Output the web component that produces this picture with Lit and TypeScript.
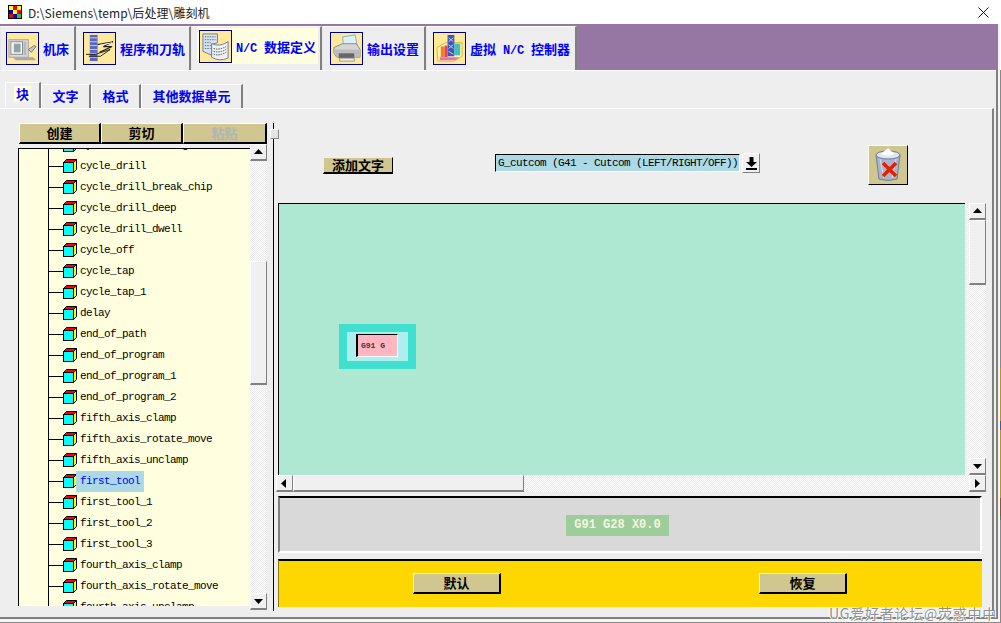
import { LitElement, html, css, svg } from "lit";
import { customElement } from "lit/decorators.js";

const NAMES = ["cycle_bore_no_drag","cycle_drill","cycle_drill_break_chip","cycle_drill_deep","cycle_drill_dwell","cycle_off","cycle_tap","cycle_tap_1","delay","end_of_path","end_of_program","end_of_program_1","end_of_program_2","fifth_axis_clamp","fifth_axis_rotate_move","fifth_axis_unclamp","first_tool","first_tool_1","first_tool_2","first_tool_3","fourth_axis_clamp","fourth_axis_rotate_move","fourth_axis_unclamp"];

const cube = html`<svg class="cube" width="14" height="14" viewBox="0 0 14 14">
  <path d="M.5 3.5 L3.5 .5 H13.5 L10.5 3.5Z" fill="#f00" stroke="#000"/>
  <path d="M10.5 3.5 L13.5 .5 V10.5 L10.5 13.5Z" fill="#ff0" stroke="#000"/>
  <rect x=".5" y="3.5" width="10" height="10" fill="#0ff" stroke="#000"/>
</svg>`;

const machine = svg`
  <rect x="2" y="7" width="20" height="18" fill="#dcdcdc" stroke="#a0a0a0"/>
  <rect x="4" y="9" width="12" height="13" fill="#f6f6f6" stroke="#8a8a8a"/>
  <rect x="7" y="11" width="7" height="9" fill="#8fa3a8"/>
  <rect x="17" y="9" width="3" height="14" fill="#b8b8b8"/>
  <path d="M22 17 L28 13 L30 14 L25 20 Z" fill="#c4c8c8" stroke="#7c7c7c"/>
  <path d="M6 25 H27 L30 28 H9Z" fill="#a9a9a9"/>`;
const program = svg`
  <rect x="6" y="2" width="8" height="27" fill="#5a66c0"/>
  <path d="M6 5 H14 M6 9 H14 M6 13 H14 M6 17 H14 M6 21 H14 M6 25 H14" stroke="#c8ccec" stroke-width="1"/>
  <path d="M14 12 L30 9 L20 14 L29 14 L16 20" fill="none" stroke="#222" stroke-width="1.2"/>
  <path d="M2 22 H12 L27 17 L17 24 H5" fill="none" stroke="#222" stroke-width="1"/>
  <path d="M15 13 L29 10" stroke="#fff" stroke-width="1"/>`;
const data = svg`
  <path d="M3 3 H18 V12 L12 14 V25 L3 21Z" fill="#d8e2ee" stroke="#6b7e95"/>
  <path d="M12 13 Q20 17 29 11 V28 Q20 32 12 27Z" fill="#eef1f4" stroke="#6b7e95"/>
  <path d="M5 6 H16 M5 9 H16 M5 12 H11 M5 15 H11 M5 18 H11" stroke="#5a6a80" stroke-dasharray="1.5 1"/>
  <path d="M14 18 Q20 20 27 16 M14 21 Q20 23 27 19 M14 24 Q20 26 27 22" stroke="#4a4a4a" fill="none" stroke-dasharray="1.5 1"/>`;
const printer = svg`
  <path d="M12 4 L25 2 L27 13 L13 15Z" fill="#d9f2f7" stroke="#9ab"/>
  <path d="M3 15 L12 11 H26 L30 17 V25 H6 L3 21Z" fill="#d6d6d6" stroke="#8c8c8c"/>
  <path d="M3 17 H30 V25 H6Z" fill="#bcbcbc"/>
  <rect x="8" y="21" width="16" height="5" fill="#666"/>
  <rect x="9" y="26" width="15" height="3" fill="#eee" stroke="#999"/>`;
const virtual = svg`
  <path d="M3 15 L12 10 H29 V24 L21 29 H4Z" fill="#fff3a8" stroke="#d8b83c"/>
  <rect x="14" y="2" width="7" height="22" fill="#3d55bf"/>
  <path d="M15 5 L20 9 M20 5 L15 9 M15 12 L20 16 M20 12 L15 16 M15 19 L20 22" stroke="#c5d0f3"/>
  <rect x="7" y="14" width="4" height="11" fill="#f08020"/>
  <rect x="11" y="13" width="3" height="12" fill="#e84060"/>
  <rect x="21" y="11" width="6" height="12" fill="#40c0c0"/>
  <path d="M6 25 H26 L22 28 H6Z" fill="#e070d0"/>`;

const triangle = (dir: string) => {
  const d: Record<string, string> = { up: "M0 6 L4.5 1 L9 6Z", down: "M0 2 H9 L4.5 7Z", left: "M6 0 V9 L1 4.5Z", right: "M2 0 V9 L7 4.5Z" };
  return html`<span class="sb-btn"><svg width="9" height="9" viewBox="0 0 9 9"><path d=${d[dir]} fill="#000"/></svg></span>`;
};

const TABS = [
  { cls: "t1", label: "机床", icon: machine },
  { cls: "t2", label: "程序和刀轨", icon: program },
  { cls: "t3 on", label: html`<b class="m">N/C</b>数据定义`, icon: data },
  { cls: "t4", label: "输出设置", icon: printer },
  { cls: "t5", label: html`虚拟<b class="m">N/C</b>控制器`, icon: virtual },
];

@customElement("app-root")
export class AppRoot extends LitElement {
  static styles = css`
    :host { display: block; position: relative; width: 1001px; height: 623px; overflow: hidden; background: #fff; font-family: "Noto Sans CJK SC", "Liberation Sans", sans-serif; }
    * { box-sizing: border-box; }
    .title { height: 24px; background: #fff; display: flex; align-items: center; padding-left: 8px; font-size: 12px; color: #222; }
    .title .txt { margin-left: 6px; font-family: "Noto Sans CJK SC", sans-serif; letter-spacing: .1px; }
    .title .close { margin-left: auto; margin-right: 12px; }
    .main { display: flex; height: 599px; border-bottom: 1px solid #888; background: #f4f4f4; }
    .window { width: 998px; height: 595px; background: #f0f0f0; border-bottom: 2px solid #808080; display: flex; flex-direction: column; }
    .body { flex: 1; min-height: 0; display: flex; flex-direction: column; border-right: 2px solid #808080; }
    .edge { width: 3px; display: flex; flex-direction: column; align-items: flex-end; background: #f4f4f4; }
    .edge i { display: block; width: 1px; }
    .e0 { height: 46px; background: #fff; }
    .e1 { height: 298px; background: #888; }
    .e2 { height: 53px; background: #c09020; }
    .e3 { height: 9px; background: #3a5ea8; }
    .e4 { height: 68px; background: #c09020; }
    .e5 { height: 18px; background: #8a5a20; }
    .e6 { height: 4px; background: #3a8a50; }
    .e7 { flex: 1; background: #888; }
    .tabs { height: 46px; flex: none; background: #9676a2; display: flex; align-items: flex-end; }
    .tab { height: 44px; background: #eee; border-top: 1px solid #fff; border-left: 1px solid #e8e8e8; border-right: 2px solid #808080; display: flex; align-items: center; padding-left: 6px; font-size: 13px; font-weight: 700; color: #0000ff; white-space: nowrap; }
    .in { display: flex; align-items: center; gap: 4px; }
    .t1 { width: 76px; padding-left: 5px; } .t2 { width: 115px; } .t3 { width: 131px; padding-left: 5px; } .t4 { width: 104px; padding-left: 7px; } .t5 { width: 151px; }
    .t3 .in { width: 121px; height: 36px; margin-bottom: 5px; background: #ffffe0; padding-left: 2px; }
    .m { font-family: "Liberation Mono", monospace; font-size: 12px; font-weight: 700; letter-spacing: -.2px; margin: 0 7px; }
    .t3 .m { margin-left: 0; margin-right: 7px; }
    .ico { width: 33px; height: 33px; flex: none; border: 1px solid #000080; background: #ffe99a; display: block; }
    .rule { height: 1px; flex: none; background: #fff; }
    .sub { height: 37px; flex: none; background: #eee; display: flex; align-items: flex-end; padding-left: 5px; }
    .st { height: 24px; background: #eee; border-top: 1px solid #fff; border-left: 1px solid #fff; border-right: 2px solid #808080; display: flex; align-items: center; justify-content: center; padding-bottom: 2px; font-size: 13px; font-weight: 700; color: #00f; }
    .st.s1 { width: 36px; height: 26px; padding-bottom: 0; }
    .st.s1 span { background: #ffffe0; padding: 0 2px; line-height: 16px; margin-bottom: 4px; }
    .st.s2 { width: 50px; } .st.s3 { width: 50px; } .st.s4 { width: 102px; }
    .panel { flex: 1; min-height: 0; width: 994px; background: #eee; border-top: 1px solid #fff; border-right: 2px solid #808080; display: flex; padding-left: 18px; }
    .left { width: 249px; flex: none; padding-top: 14px; }
    .btns { display: flex; padding-left: 1px; height: 21px; }
    .btn { background: #cfc690; border-top: 1px solid #fffff0; border-left: 1px solid #fffff0; border-right: 2px solid #000; border-bottom: 2px solid #000; padding-bottom: 1px; font-size: 13px; font-weight: 700; color: #000; display: flex; align-items: center; justify-content: center; line-height: 1; }
    .btns .btn { width: 82px; }
    .btns .btn:last-child { width: 84px; color: #b4b4b4; }
    .lbody { display: flex; height: 466px; }
    .tree { width: 233px; height: 458px; margin-top: 4px; background: #ffffe0; border-top: 1px solid #000; border-left: 1px solid #000; overflow: hidden; }
    .list { margin: -14px 0 0 29px; border-left: 1px solid #000; }
    .row { height: 21px; display: flex; align-items: center; font: 11px/21px "Liberation Mono", monospace; letter-spacing: -.6px; color: #000; white-space: nowrap; }
    .row::before { content: ""; width: 14px; height: 1px; background: #000; flex: none; margin-top: -1px; }
    .cube { flex: none; margin-top: -2px; }
    .row span { height: 21px; padding: 0 4px 0 4px; margin-left: -1px; }
    .row.sel span { background: #add8e6; color: #00f; }
    .vbar { width: 17px; flex: none; display: flex; flex-direction: column; }
    .track { background: repeating-conic-gradient(#fff 0 25%, #e9e9e9 0 50%) 0 0 / 2px 2px; }
    .sb-btn { width: 17px; height: 17px; flex: none; background: #f0f0f0; border-top: 1px solid #fff; border-left: 1px solid #fff; border-right: 1px solid #808080; border-bottom: 2px solid #808080; display: flex; align-items: center; justify-content: center; }
    .thumb { flex: none; background: #f0f0f0; border-top: 1px solid #fff; border-left: 1px solid #fff; border-right: 1px solid #808080; border-bottom: 2px solid #808080; }
    .gap { flex: 1; }
    .lth { height: 124px; margin-top: 100px; }
    .right { width: 720px; flex: none; margin-left: 6px; margin-top: 14px; height: 488px; border-left: 1px solid #000; position: relative; }
    .knob { position: absolute; left: -4px; top: 6px; width: 9px; height: 10px; background: #e4e4e4; border: 1px solid #fff; border-right-color: #888; border-bottom-color: #888; }
    .head { height: 80px; display: flex; align-items: center; }
    .btn.add { width: 70px; height: 17px; margin-left: 49px; margin-top: 4px; font-size: 13px; border-top: 1px solid #eee; border-left: 1px solid #eee; border-right: 1px solid #000; border-bottom: 2px solid #000; }
    .combo { width: 245px; height: 18px; margin-left: 102px; background: #add8e6; border-top: 1px solid #000; border-left: 1px solid #000; border-bottom: 1px solid #fff; border-right: 1px solid #fff; font: 11px/17px "Liberation Mono", monospace; letter-spacing: -.6px; padding-left: 2px; white-space: pre; overflow: hidden; color: #000; }
    .arrow { width: 18px; height: 20px; margin-left: 2px; background: #f0f0f0; border-top: 1px solid #fff; border-left: 1px solid #fff; border-right: 1px solid #808080; border-bottom: 1px solid #808080; display: flex; align-items: center; justify-content: center; }
    .trash { width: 40px; height: 40px; margin-left: 108px; margin-top: 3px; background: #cfc690; border-top: 1px solid #fffff0; border-left: 1px solid #fffff0; border-right: 1px solid #000; border-bottom: 1px solid #000; display: block; }
    .scroller { margin-left: 2px; width: 710px; display: grid; grid-template-columns: 689px 21px; grid-template-rows: 272px 17px; }
    .canvas { position: relative; margin-left: 2px; background: #aee8d2; border-top: 1px solid #000; border-left: 1px solid #000; }
    .block { position: absolute; left: 60px; top: 120px; width: 77px; height: 45px; background: #40e0d0; padding: 8px; }
    .block div { height: 29px; background: #afeeee; padding: 2px 0 0 9px; }
    .block p { margin: 0; width: 42px; height: 23px; background: #ffb6c1; border-top: 1px solid #000; border-left: 2px solid #000; border-right: 1px solid #fff; border-bottom: 1px solid #fff; font: 700 8px/22px "Liberation Mono", monospace; color: #334; padding-left: 3px; white-space: pre; }
    .vb2 { display: flex; flex-direction: column; align-items: flex-end; }
    .vb2 .thumb { width: 17px; height: 65px; }
    .hb2 { grid-column: 1 / 3; display: flex; }
    .hb2 .thumb { width: 231px; height: 17px; }
    .rb { width: 4px; flex: none; }
    .grey { margin: 4px 0 0 4px; width: 704px; height: 57px; background: #d9d9d9; border-top: 2px solid #000; border-left: 2px solid #808080; border-right: 2px solid #fff; border-bottom: 2px solid #fff; display: flex; align-items: center; padding-left: 286px; }
    .grey span { width: 103px; height: 21px; margin-top: 1px; background: #9dcd9a; color: #f5f5dc; font: 700 12px/21px "Liberation Mono", monospace; text-align: center; white-space: pre; }
    .yellow { margin: 6px 0 0 4px; width: 704px; height: 48px; background: #ffd700; border-top: 2px solid #000; border-left: 1px solid #8a7a10; display: flex; align-items: center; justify-content: space-between; padding: 0 135px 2px 134px; }
    .yellow .btn { width: 88px; height: 21px; }
    .mark { position: absolute; left: 829px; top: 603px; font-size: 14px; letter-spacing: .75px; color: #8f8f8f; white-space: nowrap; text-shadow: 1px 1px 0 #fff, -1px 0 0 #fff; font-family: "Noto Sans CJK SC", sans-serif; }
  `;

  render() {
    return html`
      <div class="title">
        <svg width="14" height="14" viewBox="0 0 14 14" shape-rendering="crispEdges">
          <rect width="14" height="14" fill="#000"/>
          <rect x="1" y="1" width="4" height="4" fill="#ff0"/><rect x="5" y="1" width="4" height="4" fill="#e00"/><rect x="9" y="1" width="4" height="4" fill="#ff0"/>
          <rect x="1" y="5" width="4" height="4" fill="#00c"/><rect x="5" y="5" width="4" height="4" fill="#ff0"/><rect x="9" y="5" width="4" height="4" fill="#e00"/>
          <rect x="1" y="9" width="4" height="4" fill="#e00"/><rect x="5" y="9" width="4" height="4" fill="#00c"/><rect x="9" y="9" width="4" height="4" fill="#2c2"/>
        </svg>
        <span class="txt">D:\\Siemens\\temp\\后处理\\雕刻机</span>
        <svg class="close" width="11" height="11" viewBox="0 0 11 11"><path d="M.5 .5 L10.5 10.5 M10.5 .5 L.5 10.5" stroke="#111" fill="none"/></svg>
      </div>
      <div class="main">
        <div class="window">
          <div class="tabs">
            ${TABS.map(t => html`<div class="tab ${t.cls}"><div class="in"><svg class="ico" viewBox="0 0 32 32">${t.icon}</svg><span>${t.label}</span></div></div>`)}
          </div>
          <div class="body">
            <div class="rule"></div>
            <div class="sub">
              <div class="st s1"><span>块</span></div>
              <div class="st s2">文字</div>
              <div class="st s3">格式</div>
              <div class="st s4">其他数据单元</div>
            </div>
            <div class="panel">
              <div class="left">
                <div class="btns">
                  <div class="btn">创建</div><div class="btn">剪切</div><div class="btn">粘贴</div>
                </div>
                <div class="lbody">
                  <div class="tree"><div class="list">
                    ${NAMES.map(n => html`<div class="row ${n === "first_tool" ? "sel" : ""}">${cube}<span>${n}</span></div>`)}
                  </div></div>
                  <div class="vbar track">
                    ${triangle("up")}
                    <div class="thumb lth"></div>
                    <div class="gap"></div>
                    ${triangle("down")}
                  </div>
                </div>
              </div>
              <div class="right">
                <div class="knob"></div>
                <div class="head">
                  <div class="btn add">添加文字</div>
                  <div class="combo">G_cutcom (G41 - Cutcom (LEFT/RIGHT/OFF))</div>
                  <div class="arrow"><svg width="13" height="15" viewBox="0 0 13 15"><path d="M4.5 1 H8.5 V6 H12 L6.5 11 L1 6 H4.5Z" fill="#000"/><rect x="1" y="12" width="11" height="2" fill="#000"/></svg></div>
                  <svg class="trash" viewBox="0 0 38 38">
                    <path d="M7 9 Q19 4 31 9 L28 33 Q19 36 10 33Z" fill="#a8b6cc" stroke="#6c7c98"/>
                    <ellipse cx="19" cy="9" rx="12" ry="4" fill="#dfe6f0" stroke="#6c7c98"/>
                    <path d="M12 8 L19 2 L25 8 Q19 11 12 8Z" fill="#fff"/>
                    <path d="M11 13 L15 32 M27 13 L23 32" stroke="#d8e0ec" fill="none"/>
                    <path d="M14 17 L27 30 M27 17 L14 30" stroke="#e02000" stroke-width="3.4"/>
                  </svg>
                </div>
                <div class="scroller">
                  <div class="canvas">
                    <div class="block"><div><p>G91 G</p></div></div>
                  </div>
                  <div class="vb2 track">
                    ${triangle("up")}
                    <div class="thumb"></div>
                    <div class="gap"></div>
                    ${triangle("down")}
                  </div>
                  <div class="hb2 track">
                    ${triangle("left")}
                    <div class="thumb"></div>
                    <div class="gap"></div>
                    <span class="rb"></span>
                    ${triangle("right")}
                  </div>
                </div>
                <div class="grey"><span>G91 G28 X0.0</span></div>
                <div class="yellow">
                  <div class="btn">默认</div>
                  <div class="btn">恢复</div>
                </div>
              </div>
            </div>
          </div>
        </div>
        <div class="edge"><i class="e0"></i><i class="e1"></i><i class="e2"></i><i class="e3"></i><i class="e4"></i><i class="e5"></i><i class="e6"></i><i class="e7"></i></div>
      </div>
      <div class="mark">UG爱好者论坛@荧惑中中</div>
    `;
  }
}
